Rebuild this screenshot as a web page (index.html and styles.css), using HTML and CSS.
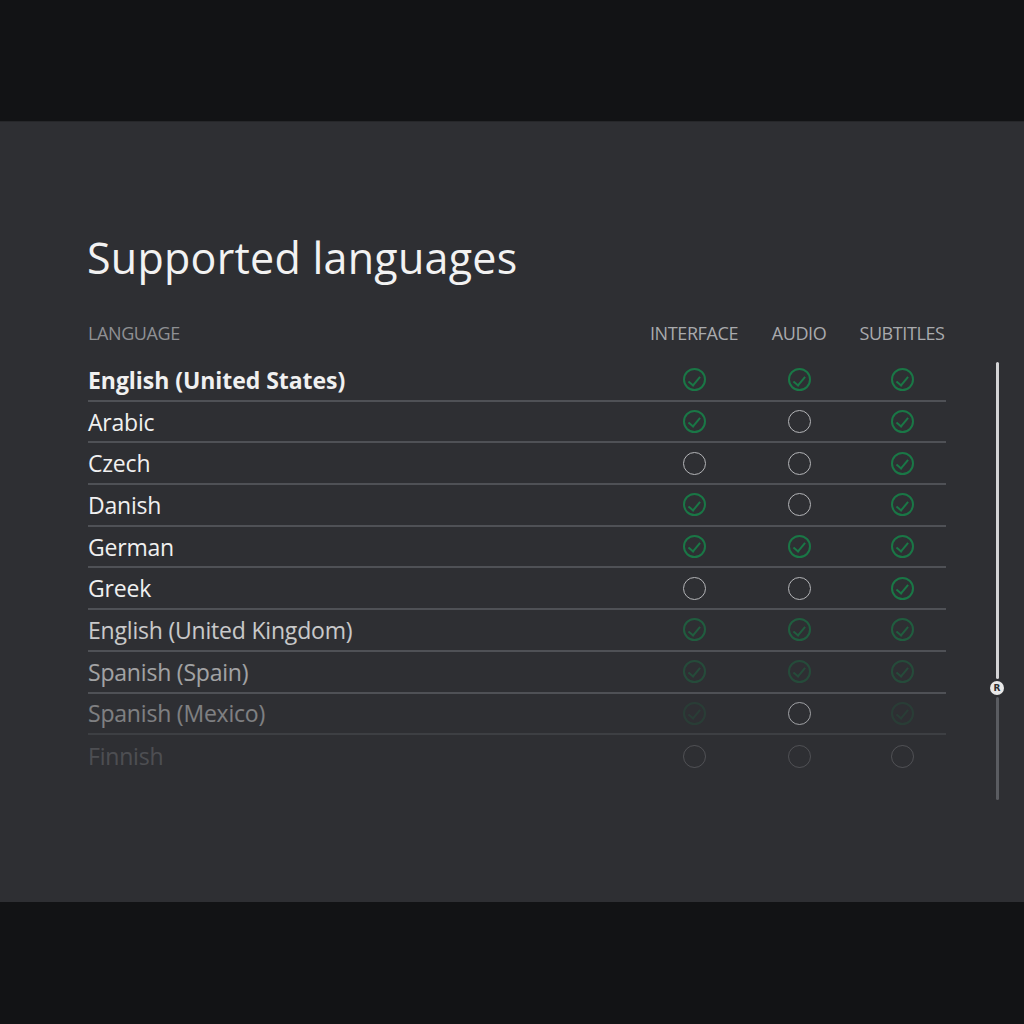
FILE: index.html
```html
<!DOCTYPE html>
<html>
<head>
<meta charset="utf-8">
<link rel="stylesheet" href="styles.css">
</head>
<body>
<div class="band"></div>
<main class="panel">
  <h1 class="title">Supported languages</h1>
  <div class="content">
    <div class="table">
      <div class="row head">
        <div class="name">LANGUAGE</div>
        <div class="cell">INTERFACE</div>
        <div class="cell">AUDIO</div>
        <div class="cell">SUBTITLES</div>
      </div>
      <div class="row first">
        <div class="name bold">English (United States)</div>
        <div class="cell"><span class="ic yes"></span></div>
        <div class="cell"><span class="ic yes"></span></div>
        <div class="cell"><span class="ic yes"></span></div>
      </div>
      <div class="row">
        <div class="name">Arabic</div>
        <div class="cell"><span class="ic yes"></span></div>
        <div class="cell"><span class="ic no"></span></div>
        <div class="cell"><span class="ic yes"></span></div>
      </div>
      <div class="row">
        <div class="name">Czech</div>
        <div class="cell"><span class="ic no"></span></div>
        <div class="cell"><span class="ic no"></span></div>
        <div class="cell"><span class="ic yes"></span></div>
      </div>
      <div class="row">
        <div class="name">Danish</div>
        <div class="cell"><span class="ic yes"></span></div>
        <div class="cell"><span class="ic no"></span></div>
        <div class="cell"><span class="ic yes"></span></div>
      </div>
      <div class="row">
        <div class="name">German</div>
        <div class="cell"><span class="ic yes"></span></div>
        <div class="cell"><span class="ic yes"></span></div>
        <div class="cell"><span class="ic yes"></span></div>
      </div>
      <div class="row">
        <div class="name">Greek</div>
        <div class="cell"><span class="ic no"></span></div>
        <div class="cell"><span class="ic no"></span></div>
        <div class="cell"><span class="ic yes"></span></div>
      </div>
      <div class="row fade1">
        <div class="name">English (United Kingdom)</div>
        <div class="cell"><span class="ic yes"></span></div>
        <div class="cell"><span class="ic yes"></span></div>
        <div class="cell"><span class="ic yes"></span></div>
      </div>
      <div class="row fade2">
        <div class="name">Spanish (Spain)</div>
        <div class="cell"><span class="ic yes"></span></div>
        <div class="cell"><span class="ic yes"></span></div>
        <div class="cell"><span class="ic yes"></span></div>
      </div>
      <div class="row fade3">
        <div class="name">Spanish (Mexico)</div>
        <div class="cell"><span class="ic yes dim"></span></div>
        <div class="cell"><span class="ic no"></span></div>
        <div class="cell"><span class="ic yes dim"></span></div>
      </div>
      <div class="row fade4 last">
        <div class="name">Finnish</div>
        <div class="cell"><span class="ic no"></span></div>
        <div class="cell"><span class="ic no"></span></div>
        <div class="cell"><span class="ic no"></span></div>
      </div>
    </div>
    <div class="scroll">
      <div class="track-top"></div>
      <div class="thumb">R</div>
      <div class="track-bottom"></div>
    </div>
  </div>
</main>
<div class="band"></div>
</body>
</html>
```

FILE: styles.css
```css
* { box-sizing: border-box; margin: 0; padding: 0; }
html, body { background: #121315; }
body {
  width: 1024px;
  height: 1024px;
  display: flex;
  flex-direction: column;
  font-family: "Open Sans", "Noto Sans", sans-serif;
  color: #ffffff;
  overflow: hidden;
}
.band { height: 121px; background: #121315; flex: none; }
.panel {
  height: 781px;
  flex: none;
  background: #2e2f33;
  border-top: 1px solid #26272a;
  padding: 108px 0 0 88px;
}
.title {
  font-weight: 400;
  font-size: 43px;
  line-height: 56px;
  color: #f2f2f2;
  letter-spacing: 0.25px;
  margin-left: -1px;
}
.content {
  display: flex;
  margin-top: 27px;
}
.table {
  width: 858px;
}
.row {
  display: grid;
  grid-template-columns: 1fr 92px 118px 88px;
  align-items: center;
  height: 41.7px;
  border-bottom: 2px solid #4f5156;
}
.row.head { border-bottom: none; height: 40px; margin-bottom: 7px; }
.row.last { border-bottom: none; }
.head .name, .head .cell {
  font-size: 18px;
  color: #8f9093;
  letter-spacing: -0.4px;
}
.head .cell { color: #a9aaad; }
.name {
  font-size: 23px;
  color: #f0f0f0;
  letter-spacing: -0.2px;
}
.name.bold { font-weight: 700; letter-spacing: -0.05px; }
.cell { display: flex; justify-content: center; }
.ic {
  width: 23px;
  height: 23px;
  border-radius: 50%;
  position: relative;
}
.ic.no { border: 1.8px solid #b4b5b8; }
.ic.yes { border: 2px solid #1a7746; }
.ic.yes::after {
  content: "";
  position: absolute;
  left: 6px;
  top: 3.3px;
  width: 5px;
  height: 9.5px;
  border-right: 2px solid #1a7746;
  border-bottom: 2px solid #1a7746;
  transform: rotate(40deg);
}
.fade1 .name { opacity: 0.8; }
.fade1 .ic { opacity: 0.65; }
.fade2 .name { opacity: 0.6; }
.fade2 .ic { opacity: 0.4; }
.fade3 .name { opacity: 0.42; }
.fade3 .ic.dim { opacity: 0.2; }
.fade3 .ic.no { opacity: 0.85; }
.fade3 { border-bottom-color: #3d3f43; }
.fade4 .name { opacity: 0.16; }
.fade4 .ic { opacity: 0.25; }
.scroll {
  margin-left: 43px;
  margin-top: 49px;
  width: 16px;
  display: flex;
  flex-direction: column;
  align-items: center;
}
.track-top { width: 3px; height: 317px; background: #d4d4d6; border-radius: 2px; }
.thumb {
  width: 14px;
  height: 14px;
  border-radius: 50%;
  background: #e8e8e8;
  color: #2e2f33;
  font-size: 9px;
  font-weight: 700;
  line-height: 14px;
  text-align: center;
  margin: 2px 0;
  font-family: "DejaVu Sans", sans-serif;
}
.track-bottom { width: 3px; height: 103px; background: #5a5c61; border-radius: 2px; }
```
